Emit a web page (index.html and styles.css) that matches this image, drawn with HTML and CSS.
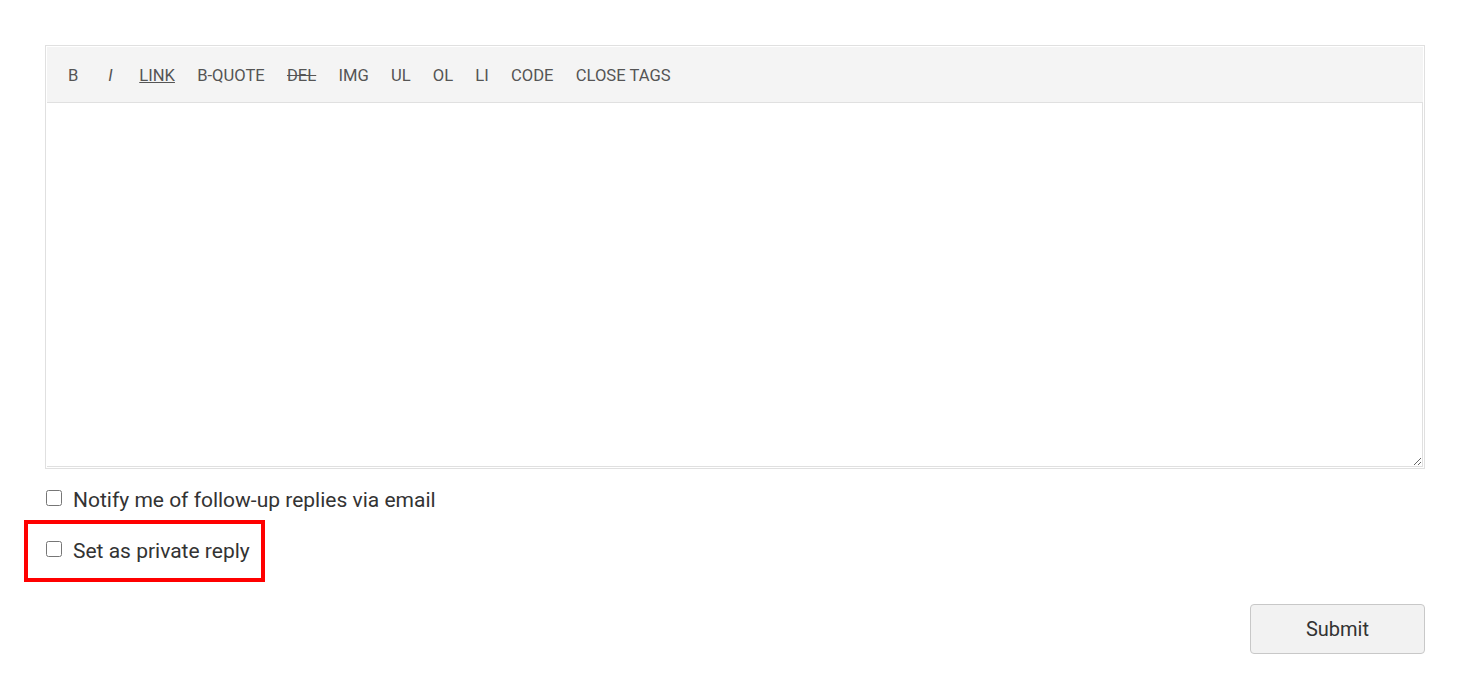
FILE: index.html
```html
<!DOCTYPE html>
<html>
<head>
<meta charset="utf-8">
<link rel="stylesheet" href="styles.css">
</head>
<body>
<div class="page">
  <div class="editor">
    <div class="toolbar">
      <span class="qt qt-b">B</span>
      <span class="qt qt-i">I</span>
      <span class="qt qt-link">LINK</span>
      <span class="qt">B-QUOTE</span>
      <span class="qt qt-del">DEL</span>
      <span class="qt">IMG</span>
      <span class="qt">UL</span>
      <span class="qt">OL</span>
      <span class="qt">LI</span>
      <span class="qt">CODE</span>
      <span class="qt">CLOSE TAGS</span>
    </div>
    <textarea class="body-input"></textarea>
  </div>
  <label class="check-row first"><input type="checkbox" class="cb"> <span>Notify me of follow-up replies via email</span></label>
  <label class="check-row highlight"><input type="checkbox" class="cb"> <span>Set as private reply</span></label>
  <div class="actions">
    <button class="submit">Submit</button>
  </div>
</div>
</body>
</html>
```

FILE: styles.css
```css
html, body {
  margin: 0;
  padding: 0;
  background: #fff;
}
.page {
  padding: 45px 45px 0 45px;
  width: 1380px;
  font-family: Roboto, "Liberation Sans", sans-serif;
  color: #333;
}
.editor {
  border: 1px solid #e0e0e0;
  padding: 1px;
  display: flex;
  flex-direction: column;
}
.toolbar {
  background: #f4f4f4;
  height: 55px;
  border-bottom: 1px solid #e0e0e0;
  display: flex;
  align-items: center;
  padding-left: 21px;
  font-size: 16.6px;
  color: #555;
}
.qt {
  margin-right: 22.2px;
  line-height: 20px;
  padding-top: 2px;
}
.qt-b { margin-right: 30px; }
.qt-i { font-style: italic; margin-right: 26.5px; }
.qt-link { text-decoration: underline; }
.qt-del { text-decoration: line-through; }
.body-input {
  display: block;
  height: 364px;
  margin: 0;
  border: none;
  border-right: 1px solid #e0e0e0;
  border-bottom: 1px solid #e0e0e0;
  padding: 8px;
  resize: vertical;
  font-family: Roboto, "Liberation Sans", sans-serif;
  font-size: 16px;
  outline: none;
  box-sizing: border-box;
  width: 100%;
}
.check-row {
  display: flex;
  align-items: center;
  gap: 11px;
  font-size: 21px;
  color: #333;
  width: max-content;
}
.check-row.first {
  margin-top: 18px;
  height: 26px;
}
.cb {
  width: 16px;
  height: 16px;
  margin: 0 0 4px 1px;
}
.check-row.highlight {
  margin-top: 7px;
  margin-left: -21px;
  border: 4px solid #ff0000;
  padding: 12px 11px 12px 17px;
  height: 30px;
}
.actions {
  display: flex;
  justify-content: flex-end;
  margin-top: 22px;
}
.submit {
  width: 175px;
  height: 50px;
  background: #f2f2f2;
  border: 1px solid #c8c8c8;
  border-radius: 4px;
  font-family: Roboto, "Liberation Sans", sans-serif;
  font-size: 20px;
  color: #333;
}
```
